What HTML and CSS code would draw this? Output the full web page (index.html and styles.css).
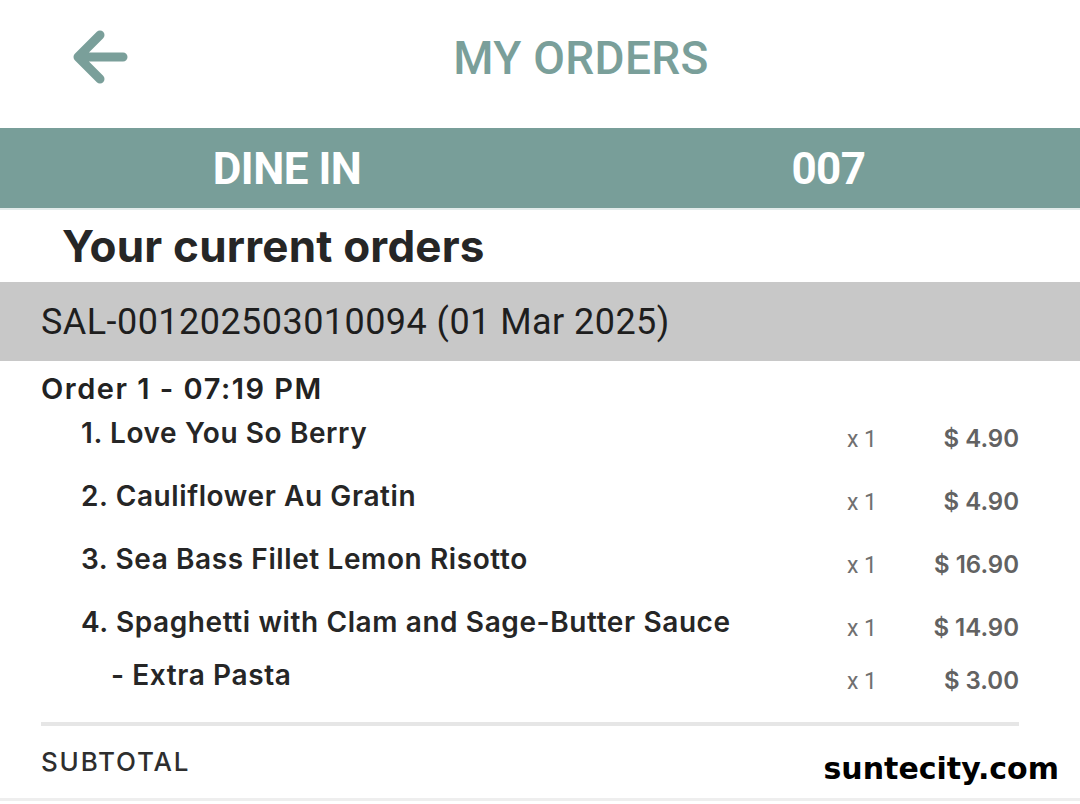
FILE: index.html
```html
<!DOCTYPE html>
<html>
<head>
<meta charset="utf-8">
<link rel="stylesheet" href="styles.css">
</head>
<body>
<div class="page">
  <header class="topbar">
    <svg class="back" width="62" height="58" viewBox="0 0 62 58">
      <path d="M53 29 H8 M30 7 L8 29 L30 51" fill="none" stroke="#7a9f9a" stroke-width="9" stroke-linecap="round" stroke-linejoin="round"/>
    </svg>
    <h1 class="title">MY ORDERS</h1>
  </header>
  <div class="band">
    <div class="band-cell">DINE IN</div>
    <div class="band-cell">007</div>
  </div>
  <div class="band-line"></div>
  <h2 class="section-title">Your current orders</h2>
  <div class="receipt">SAL-001202503010094 (01 Mar 2025)</div>
  <div class="order">
    <div class="order-head">Order 1 - 07:19 PM</div>
    <div class="item">
      <span class="name">1. Love You So Berry</span><span class="qty">x 1</span><span class="price">$ 4.90</span>
    </div>
    <div class="item">
      <span class="name">2. Cauliflower Au Gratin</span><span class="qty">x 1</span><span class="price">$ 4.90</span>
    </div>
    <div class="item">
      <span class="name">3. Sea Bass Fillet Lemon Risotto</span><span class="qty">x 1</span><span class="price">$ 16.90</span>
    </div>
    <div class="item short">
      <span class="name">4. Spaghetti with Clam and Sage-Butter Sauce</span><span class="qty">x 1</span><span class="price">$ 14.90</span>
    </div>
    <div class="item sub">
      <span class="name">- Extra Pasta</span><span class="qty">x 1</span><span class="price">$ 3.00</span>
    </div>
    <div class="divider"></div>
    <div class="subtotal-row">
      <span class="subtotal">SUBTOTAL</span>
      <span class="watermark">suntecity.com</span>
    </div>
  </div>
  <div class="bottom-line"></div>
</div>
</body>
</html>
```
FILE: styles.css
```css
html, body {
  margin: 0;
  padding: 0;
  background: #ffffff;
}
.page {
  width: 1080px;
  height: 804px;
  overflow: hidden;
  font-family: Inter, "Noto Sans", sans-serif;
  color: #2a2a2a;
}
.topbar {
  position: relative;
  height: 128px;
  display: flex;
  align-items: center;
  justify-content: center;
}
.back {
  position: absolute;
  left: 70px;
  top: 28px;
}
.title {
  margin: 0;
  font-family: Roboto, sans-serif;
  font-weight: 500;
  font-size: 46px;
  color: #7a9f9a;
  letter-spacing: 0.3px;
  padding-left: 82px;
  padding-bottom: 12px;
}
.band {
  height: 80px;
  background: #789e99;
  display: grid;
  grid-template-columns: 540px 523px;
  padding-left: 17px;
  align-items: center;
}
.band-cell {
  text-align: center;
  color: #ffffff;
  font-family: Roboto, sans-serif;
  font-weight: 700;
  font-size: 44px;
  letter-spacing: -0.5px;
  padding-top: 2px;
}
.band-cell + .band-cell {
  padding-left: 20px;
}
.band-line {
  height: 2px;
  background: #e2ebea;
}
.section-title {
  margin: 0;
  height: 72px;
  box-sizing: border-box;
  padding: 9px 0 0 62px;
  font-size: 44px;
  font-weight: 700;
  color: #262626;
  letter-spacing: 0.2px;
}
.receipt {
  height: 79px;
  background: #c8c8c8;
  display: flex;
  align-items: center;
  padding-left: 41px;
  font-family: Roboto, sans-serif;
  font-size: 36px;
  letter-spacing: 0.45px;
  color: #1e1e1e;
}
.order {
  padding: 13px 61px 0 41px;
}
.order-head {
  font-size: 29px;
  font-weight: 600;
  color: #222222;
  line-height: 30px;
  letter-spacing: 1.5px;
  margin-bottom: 14px;
}
.item {
  display: flex;
  align-items: baseline;
  height: 63px;
  padding-left: 40px;
  line-height: 30px;
}
.item.short {
  height: 53px;
}
.item.sub {
  padding-left: 70px;
  height: 62px;
}
.name {
  flex: 1;
  font-size: 28px;
  font-weight: 600;
  color: #262626;
  letter-spacing: 0.6px;
  white-space: nowrap;
}
.qty {
  width: 62px;
  font-family: Roboto, sans-serif;
  font-size: 23px;
  color: #707070;
  position: relative;
  top: 4px;
}
.price {
  width: 110px;
  white-space: nowrap;
  text-align: right;
  font-size: 24px;
  font-weight: 600;
  color: #626262;
  position: relative;
  top: 4px;
}
.divider {
  height: 4px;
  background: #e6e6e6;
}
.subtotal-row {
  display: flex;
  justify-content: space-between;
  align-items: flex-start;
  height: 72px;
  margin-right: -39px;
}
.subtotal {
  margin-top: 20px;
  font-size: 26px;
  font-weight: 500;
  color: #2e2e2e;
  letter-spacing: 1.8px;
}
.watermark {
  margin-top: 25px;
  font-family: "DejaVu Sans", sans-serif;
  font-weight: 700;
  font-size: 30px;
  color: #000000;
  margin-right: -1px;
}
.bottom-line {
  height: 3px;
  background: #eeeeee;
}
```
